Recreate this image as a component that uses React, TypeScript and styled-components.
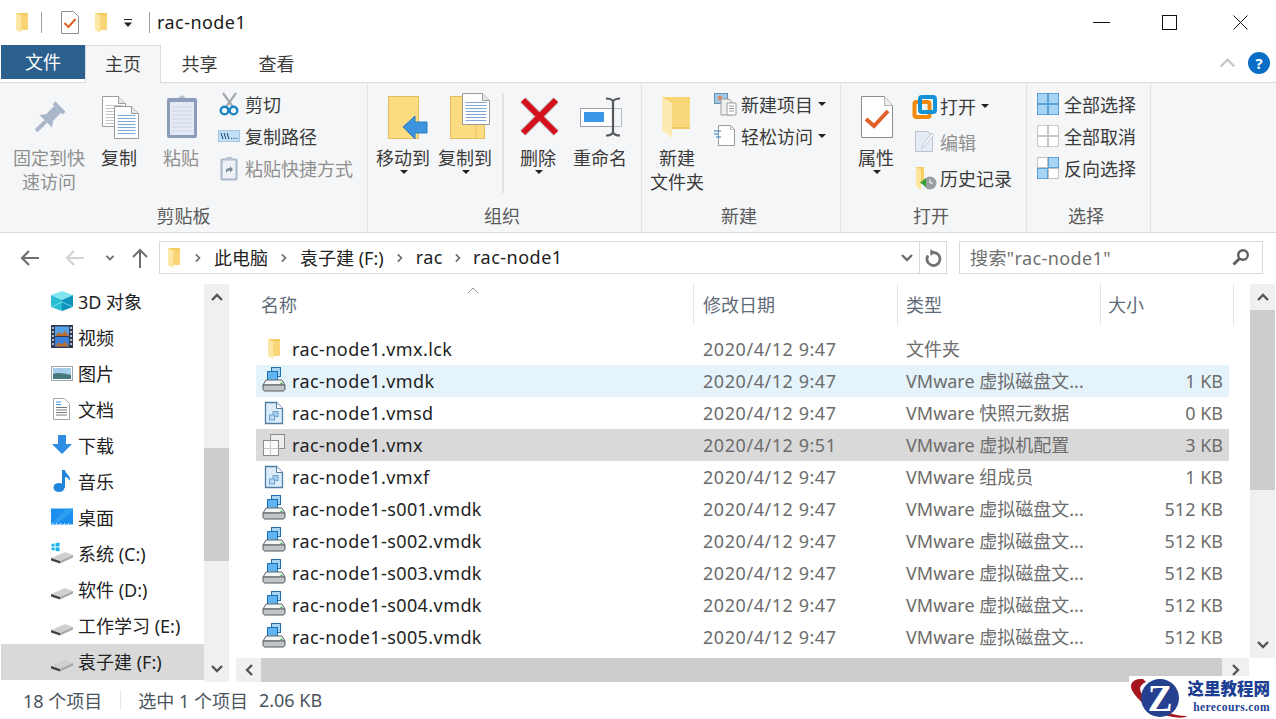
import React from 'react';
import styled, { createGlobalStyle } from 'styled-components';

const GlobalStyle = createGlobalStyle`
  html, body { margin: 0; padding: 0; background: #fff; }
  body { font-family: "Noto Sans", "Noto Sans CJK SC", sans-serif; font-size: 18px; color: #222; }
  * { box-sizing: border-box; }
  svg { display: block; flex-shrink: 0; overflow: visible; }
`;

/* ---------- icons ---------- */

const Folder = ({ w = 14, h = 22 }: { w?: number; h?: number }) => (
  <svg width={w} height={h} viewBox="0 0 14 22">
    <path d="M1 1h12v17H1z" fill="#f4cd62" />
    <path d="M1 1l5.500 2.500V21L1 18z" fill="#fde7a4" />
    <path d="M6.500 3.500H13V18H6.500z" fill="#f8d677" />
  </svg>
);

const Doc = ({ x, y, w, h, lines = '#7fa8d6' }: { x: number; y: number; w: number; h: number; lines?: string }) => {
  const rows = [];
  for (let ly = y + 9; ly < y + h - 2; ly += 3) rows.push(ly);
  return (
    <g>
      <path d={`M${x} ${y}h${w - 7}l7 7v${h - 7}h-${w}z`} fill="#fff" stroke="#9a9a9a" />
      <path d={`M${x + w - 7} ${y}v7h7`} fill="#e8e8e8" stroke="#9a9a9a" />
      {rows.map(ly => <path key={ly} d={`M${x + 3} ${ly}h${w - 6}`} stroke={lines} />)}
    </g>
  );
};

const PinIcon = () => (
  <svg width="48" height="48" viewBox="0 0 48 48">
    <g transform="translate(-1 2) rotate(45 24 24) translate(4.800 4.800) scale(.8)" fill="#a9b5ca">
      <rect x="15" y="2" width="18" height="5" rx="1" />
      <rect x="18" y="7" width="12" height="14" />
      <path d="M18 21h12l5 7H13z" />
      <rect x="21.500" y="28" width="5" height="17" rx="1" />
    </g>
  </svg>
);

const CopyIcon = () => (
  <svg width="48" height="48" viewBox="0 0 48 48">
    <Doc x={7.5} y={3.5} w={23} h={30} lines="#c4c4c4" />
    <Doc x={19.5} y={13.5} w={24} h={32} />
  </svg>
);

const PasteIcon = () => (
  <svg width="48" height="48" viewBox="0 0 48 48">
    <path d="M21 5l4-3 4 3h3v4H18V5z" fill="#b6c0d2" />
    <rect x="10" y="5" width="30" height="40" rx="2" fill="#8c9dbc" />
    <rect x="13" y="9" width="24" height="33" fill="#e5e9f3" />
    {[14, 18, 22, 26, 30, 34, 38].map(y => <path key={y} d={`M15 ${y}h20`} stroke="#cdd5e6" />)}
  </svg>
);

const MoveIcon = () => (
  <svg width="48" height="48" viewBox="0 0 48 48">
    <rect x="9.500" y="3.500" width="30" height="42" fill="#fbdc80" stroke="#e2bd5c" />
    <path d="M24 34l12-11v6h12v11H36v6z" fill="#3d94de" stroke="#2b7cc0" />
  </svg>
);

const CopyToIcon = () => (
  <svg width="48" height="48" viewBox="0 0 48 48">
    <rect x="9.500" y="3.500" width="34" height="42" fill="#fbdc80" stroke="#e2bd5c" />
    <path d="M35 16v29" stroke="#eabf5d" />
    <Doc x={21.5} y={0.5} w={27} h={31} />
  </svg>
);

const DeleteIcon = () => (
  <svg width="48" height="48" viewBox="0 0 48 48">
    <path d="M9 7l33 33M42 7L9 40" stroke="#8f9092" strokeWidth="8" opacity=".45" />
    <path d="M9 7l33 33M42 7L9 40" stroke="#d5101c" strokeWidth="6" />
  </svg>
);

const RenameIcon = () => (
  <svg width="48" height="48" viewBox="0 0 48 48">
    <path d="M36 15.500H4.500v18H36" fill="#fff" stroke="#9aa0a6" />
    <path d="M38 15.500h7.500v18H38" fill="none" stroke="#b6bbc0" />
    <rect x="8" y="19" width="20" height="10" fill="#3d97e8" />
    <path d="M30 5.500c4 0 6 1 7 3 1-2 3-3 7-3M30 42.500c4 0 6-1 7-3 1 2 3 3 7 3M37 8v31" fill="none" stroke="#55585c" strokeWidth="2.200" />
  </svg>
);

const NewFolderIcon = () => (
  <svg width="48" height="48" viewBox="0 0 48 48">
    <path d="M9 4h28v31H9z" fill="#f6d572" />
    <path d="M9 4l10 6v35L9 37z" fill="#fdeab0" />
    <path d="M19 10h18v25H19z" fill="#f9d97e" />
    <path d="M19 35h18" stroke="#f0c860" strokeWidth="2" />
  </svg>
);

const PropsIcon = () => (
  <svg width="48" height="48" viewBox="0 0 48 48">
    <path d="M9.500 3.500h23l8 9v32h-31z" fill="#fff" stroke="#8d8d8d" />
    <path d="M32.500 3.500v9h8" fill="#ececec" stroke="#b5b5b5" />
    <path d="M14 26l8 7 14-15" fill="none" stroke="#e0622a" strokeWidth="4" />
  </svg>
);

const CutIcon = () => (
  <svg width="24" height="24" viewBox="0 0 24 24">
    <path d="M5 1l10 14M18 1L8 15" stroke="#a5a9ae" strokeWidth="2.200" />
    <circle cx="6.500" cy="18.500" r="3.800" fill="none" stroke="#1d85c4" strokeWidth="2.400" />
    <circle cx="15.500" cy="18.500" r="3.800" fill="none" stroke="#1d85c4" strokeWidth="2.400" />
  </svg>
);

const CopyPathIcon = () => (
  <svg width="24" height="24" viewBox="0 0 24 24">
    <rect x="0.500" y="6.500" width="21" height="11" fill="#bfe0f7" stroke="#a4c6e0" />
    <path d="M3 9l2 6M6 9l2 6M9 9l2 6" stroke="#16406a" />
    <path d="M13 14.500h1.200M15.600 14.500h1.200M18.200 14.500h1.200" stroke="#355" />
  </svg>
);

const PasteLinkIcon = () => (
  <svg width="24" height="24" viewBox="0 0 24 24">
    <rect x="3.500" y="3.500" width="15" height="20" rx="1" fill="#eef1f6" stroke="#a9b7cc" strokeWidth="2" />
    <path d="M8 1h6v3H8z" fill="#b9c4d4" />
    <path d="M8 17v-2c0-2 1-3 4-3v-2l3 3.500-3 3v-2c-2 0-3 1-4 2.500z" fill="#7c8796" />
  </svg>
);

const NewItemIcon = () => (
  <svg width="24" height="24" viewBox="0 0 24 24">
    <rect x="0.500" y="1.500" width="13" height="10" fill="#9fc8e8" stroke="#6e8fa8" />
    <rect x="4" y="4" width="4" height="4" fill="#dd8866" />
    <path d="M7 7h8l3 3v13H7z" fill="#f0f0f0" stroke="#9a9a9a" />
    <path d="M13 11h9v12h-9z" fill="#fff" stroke="#9a9a9a" />
    <path d="M15 14h5M15 16.500h5M15 19h5" stroke="#9a9a9a" />
  </svg>
);

const EasyAccessIcon = () => (
  <svg width="24" height="24" viewBox="0 0 24 24">
    <path d="M4.500 1.500h12l4 4v16h-16z" fill="#fff" stroke="#9b9b9b" />
    <path d="M16.500 1.500v4h4" fill="none" stroke="#bdbdbd" />
    <path d="M0 7h7M0 10h5M2 13h5" stroke="#2b7cc0" />
  </svg>
);

const OpenIcon = () => (
  <svg width="24" height="24" viewBox="0 0 24 24">
    <rect x="1.500" y="8" width="15" height="15" rx="2" fill="none" stroke="#f18a0c" strokeWidth="4" />
    <rect x="7" y="3" width="15" height="15" rx="2" fill="none" stroke="#1293d8" strokeWidth="4" />
  </svg>
);

const EditIcon = () => (
  <svg width="24" height="24" viewBox="0 0 24 24">
    <path d="M2.500 1.500h12l5 4v16h-17z" fill="#e5ebf5" stroke="#b9c3d2" />
    <path d="M8 19l3-6 8-10 2 2-9 11z" fill="#f6f7f9" stroke="#c7ccd4" />
  </svg>
);

const HistoryIcon = () => (
  <svg width="24" height="24" viewBox="0 0 24 24">
    <path d="M3 1h8v17H3z" fill="#f6cf63" />
    <path d="M3 1l5 3v20l-5-4z" fill="#fde59a" />
    <circle cx="17" cy="17" r="6.500" fill="#9a9da1" />
    <path d="M17 13.500V17h3" fill="none" stroke="#fff" />
    <path d="M7 16.500l6-4.500v9z" fill="#37a33a" />
  </svg>
);

const Panes = ({ filled, stroke = '#8fb9dc' }: { filled: boolean[]; stroke?: string }) => {
  const cells = [[0.5, 1.5], [11.5, 1.5], [0.5, 12.5], [11.5, 12.5]];
  return (
    <svg width="24" height="24" viewBox="0 0 24 24">
      {cells.map(([x, y], i) => (
        <rect key={i} x={x} y={y} width="10" height="10" fill={filled[i] ? '#a6d4f5' : '#fff'} stroke={filled[i] ? '#5b9fd6' : stroke} />
      ))}
    </svg>
  );
};

const Chevron = ({ dir, color = '#555', size = 14, width = 2.4 }: { dir: 'up' | 'down' | 'left' | 'right'; color?: string; size?: number; width?: number }) => {
  const angle = { up: 0, right: 90, down: 180, left: 270 }[dir];
  return (
    <svg width={size} height={size} viewBox="0 0 14 14">
      <path d="M2 10l5-5 5 5" transform={`rotate(${angle} 7 7)`} fill="none" stroke={color} strokeWidth={width} />
    </svg>
  );
};

const ArrowLeft = ({ color }: { color: string }) => (
  <svg width="20" height="20" viewBox="0 0 20 20">
    <path d="M19 10H2M9 3l-7 7 7 7" fill="none" stroke={color} strokeWidth="2.200" />
  </svg>
);

const CubeIcon = () => (
  <svg width="24" height="24" viewBox="0 0 24 24">
    <path d="M12 2l11 4-11 5L1 6z" fill="#7fe6ef" />
    <path d="M1 6l11 5v11L1 18z" fill="#2bbdd4" />
    <path d="M23 6l-11 5v11l11-4z" fill="#0d93bd" />
    <path d="M1 18l11-5 11 5" fill="none" stroke="#a8eef3" opacity=".6" />
  </svg>
);

const VideoIcon = () => (
  <svg width="24" height="24" viewBox="0 0 24 24">
    <rect x="1" y="0" width="22" height="23" fill="#2d3a55" />
    <rect x="5" y="1.500" width="14" height="9.500" fill="#58a0e8" />
    <rect x="5" y="12" width="14" height="9.500" fill="#3f7fdc" />
    <path d="M5 11l4-4 3 2 3-3 4 5zM5 21.500l4-4 3 2 3-3 4 5z" fill="#b9702c" />
    <path d="M2 3h2M2 7h2M2 11h2M2 15h2M2 19h2M20 3h2M20 7h2M20 11h2M20 15h2M20 19h2" stroke="#dfe6ef" strokeWidth="1.500" />
  </svg>
);

const PictureIcon = () => (
  <svg width="24" height="24" viewBox="0 0 24 24">
    <rect x="1.500" y="5.500" width="21" height="14" fill="#fff" stroke="#9ba6b2" />
    <rect x="3" y="7" width="18" height="11" fill="#a8cdea" />
    <path d="M3 13c5-2 10-1 18 1v4H3z" fill="#47777f" />
  </svg>
);

const DocumentIcon = () => (
  <svg width="24" height="24" viewBox="0 0 24 24">
    <path d="M3.500 1.500h11l5 5v16h-16z" fill="#fff" stroke="#a7a7a7" />
    <path d="M6 5h5M6 7.500h5" stroke="#3d94de" />
    <path d="M6 10.500h11M6 13h11M6 15.500h11M6 18h11" stroke="#7a7a7a" />
  </svg>
);

const DownloadIcon = () => (
  <svg width="24" height="24" viewBox="0 0 24 24">
    <path d="M8 2h8v9h6L12 21 2 11h6z" fill="#2f8de4" />
  </svg>
);

const MusicIcon = () => (
  <svg width="24" height="24" viewBox="0 0 24 24">
    <ellipse cx="9" cy="18.500" rx="5.500" ry="4.500" fill="#1f86dc" />
    <path d="M12 1h3c0 4 6 5 5 11-1-2-3-4-5-4v11h-3z" fill="#1f86dc" />
  </svg>
);

const DesktopIcon = () => (
  <svg width="24" height="24" viewBox="0 0 24 24">
    <rect x="1" y="3.500" width="22" height="16" fill="#1b8fee" />
    <path d="M1 19l16-15.500h6v2L6 19.500z" fill="#3da6f5" opacity=".6" />
    <path d="M2 18.500h20" stroke="#d5ecff" strokeDasharray="1 3" />
  </svg>
);

const DriveIcon = ({ system }: { system?: boolean }) => (
  <svg width="24" height="24" viewBox="0 0 24 24">
    <path d="M1 17l14-6 8 3-13 6z" fill="#cfcfd1" />
    <path d="M1 17l9 3v2.500L1 19.500z" fill="#3f4043" />
    <path d="M10 20l13-6v2.500l-13 6z" fill="#a6a7aa" />
    {system && <path d="M1.500 3l3-.5v3h-3zM5.500 2.300L9.500 1.500v4h-4zM1.500 6.500h3v3l-3-.5zM5.500 6.500h4v4l-4-.7z" fill="#17b3ea" />}
  </svg>
);

const VmdkIcon = () => (
  <svg width="24" height="24" viewBox="0 0 24 24">
    <rect x="9.500" y="-1.500" width="9" height="9" fill="#a5d4f4" stroke="#1f6fb0" />
    <rect x="5.500" y="2.500" width="10" height="10" fill="#62b4f0" stroke="#1f6fb0" />
    <path d="M4 11h16l3 5H1z" fill="#f4f5f6" stroke="#62666a" />
    <path d="M1 16h22v4c0 1-1 2-2 2H3c-1 0-2-1-2-2z" fill="#c2c5c8" stroke="#55585c" />
    <rect x="18.500" y="13.500" width="2" height="1.500" fill="#3fb54a" />
  </svg>
);

const VmsdIcon = () => (
  <svg width="24" height="24" viewBox="0 0 24 24">
    <path d="M3.500 1.500h11l6 6v15h-17z" fill="#dcebf8" stroke="#4d7fa8" strokeWidth="1.300" />
    <path d="M14.500 1.500v6h6" fill="#fff" stroke="#4d7fa8" />
    <rect x="11" y="10.500" width="5" height="5" fill="#a8cdec" stroke="#6da3d2" />
    <rect x="7.500" y="14" width="5" height="5" fill="#bcd9f1" stroke="#6da3d2" />
  </svg>
);

const VmxIcon = () => (
  <svg width="24" height="24" viewBox="0 0 24 24">
    <rect x="8.500" y="1.500" width="14" height="14" fill="#ececec" stroke="#8b8b8b" />
    <rect x="1.500" y="7.500" width="15" height="15" fill="#fbfbfb" stroke="#8b8b8b" />
    <path d="M8.500 7.500v15M1.500 15.500h15" stroke="#c9c9c9" />
  </svg>
);

/* ---------- title bar ---------- */

const TitleBar = styled.div`
  height: 45px;
  display: flex;
  align-items: center;
  padding-left: 15px;
`;

const TitleSep = styled.span<{ $left: number; $right: number }>`
  width: 1px;
  height: 21px;
  background: #a0a0a0;
  margin: 0 ${p => p.$right}px 0 ${p => p.$left}px;
`;

const QuickButton = styled.span<{ $left: number }>`
  display: flex;
  margin-left: ${p => p.$left}px;
`;

const TitleText = styled.span`
  color: #1a1a1a;
  line-height: 24px;
  letter-spacing: .45px;
  margin-bottom: 2px;
`;

const WindowControls = styled.div`
  margin-left: auto;
  display: grid;
  grid-template-columns: 69px 71px 15px;
  align-items: center;
  padding-right: 28px;
`;

/* ---------- tabs ---------- */

const TabBar = styled.div`
  height: 38px;
  display: flex;
  padding-left: 1px;
  border-bottom: 1px solid #dadbdc;
`;

const FileTab = styled.div`
  width: 84px;
  height: 34px;
  padding-bottom: 2px;
  background: #2a5f8e;
  color: #fff;
  display: flex;
  align-items: center;
  justify-content: center;
`;

const Tab = styled.div<{ $active?: boolean }>`
  width: ${p => (p.$active ? 76 : 77)}px;
  height: 38px;
  padding-bottom: 4px;
  display: flex;
  align-items: center;
  justify-content: center;
  color: #3c3c3c;
  background: ${p => (p.$active ? '#f5f6f7' : 'transparent')};
  border: 1px solid ${p => (p.$active ? '#dadbdc' : 'transparent')};
  border-bottom: 0;
`;

const TabRight = styled.div`
  margin-left: auto;
  display: flex;
  align-items: center;
  height: 35px;
  padding-right: 6px;
  gap: 11px;
`;

const HelpBadge = styled.div`
  width: 22px;
  height: 22px;
  border-radius: 50%;
  background: #0a6ec6;
  color: #fff;
  font-size: 15px;
  font-weight: 700;
  display: flex;
  align-items: center;
  justify-content: center;
`;

/* ---------- ribbon ---------- */

const Ribbon = styled.div`
  height: 150px;
  display: flex;
  background: #f5f6f7;
  border-bottom: 1px solid #dadbdc;
`;

const Group = styled.div<{ $width: number }>`
  width: ${p => p.$width}px;
  display: flex;
  flex-direction: column;
  border-right: 1px solid #e2e3e4;
`;

const GroupBody = styled.div<{ $pad: number }>`
  height: 116px;
  display: flex;
  padding-left: ${p => p.$pad}px;
`;

const GroupLabel = styled.div<{ $shift?: number }>`
  height: 33px;
  padding-bottom: 2px;
  padding-right: ${p => p.$shift ?? 0}px;
  display: flex;
  align-items: center;
  justify-content: center;
  color: #5a5a5a;
`;

const LargeButton = styled.div<{ $width: number; $disabled?: boolean }>`
  width: ${p => p.$width}px;
  display: flex;
  flex-direction: column;
  align-items: center;
  padding-top: 10px;
  color: ${p => (p.$disabled ? '#8f8f8f' : '#3b3b3b')};
`;

const LargeLabel = styled.div`
  margin-top: 5px;
  line-height: 24px;
  text-align: center;
`;

const Caret = styled.span`
  display: block;
  width: 0;
  height: 0;
  border-left: 4px solid transparent;
  border-right: 4px solid transparent;
  border-top: 4px solid #222;
  margin-left: 2px;
`;

const GroupDivider = styled.div`
  width: 2px;
  height: 100px;
  margin: 10px 4px 0 6px;
  background: #e0e1e2;
`;

const SmallColumn = styled.div<{ $left: number; $row?: number }>`
  margin-left: ${p => p.$left}px;
  padding-top: 5px;
  display: grid;
  grid-auto-rows: ${p => p.$row ?? 32}px;
`;

const SmallButton = styled.div<{ $disabled?: boolean }>`
  display: flex;
  align-items: center;
  gap: 3px;
  color: ${p => (p.$disabled ? '#8f8f8f' : '#3b3b3b')};
  white-space: nowrap;
`;

/* ---------- address bar ---------- */

const AddressBar = styled.div`
  height: 50px;
  display: flex;
  align-items: center;
  padding-bottom: 1px;
`;

const NavGroup = styled.div`
  display: grid;
  grid-template-columns: 45px 40px 27px 27px;
  align-items: center;
  padding-left: 20px;
`;

const AddressBox = styled.div`
  width: 788px;
  height: 33px;
  display: flex;
  align-items: center;
  padding-left: 7px;
  border: 1px solid #d9d9d9;
`;

const Crumb = styled.span<{ $latin?: boolean }>`
  color: #222;
  white-space: nowrap;
  padding-bottom: 2px;
  letter-spacing: ${p => (p.$latin ? '.5px' : '0')};
`;

const CrumbSep = styled.span<{ $width: number }>`
  width: ${p => p.$width}px;
  display: flex;
  justify-content: center;
`;

const AddressEnd = styled.div`
  margin-left: auto;
  height: 100%;
  display: flex;
  align-items: center;
`;

const RefreshCell = styled.div`
  width: 27px;
  height: 100%;
  margin-left: 5px;
  border-left: 1px solid #d9d9d9;
  display: flex;
  align-items: center;
  justify-content: center;
`;

const SearchBox = styled.div`
  width: 304px;
  height: 33px;
  margin-left: 12px;
  padding: 0 12px 2px 10px;
  display: flex;
  align-items: center;
  justify-content: space-between;
  border: 1px solid #d9d9d9;
  color: #6f6f6f;
  letter-spacing: .4px;
`;

/* ---------- body ---------- */

const Body = styled.div`
  height: 400px;
  display: flex;
  padding-top: 1px;
`;

const NavPane = styled.div`
  width: 204px;
  padding-left: 1px;
`;

const NavItem = styled.div<{ $selected?: boolean }>`
  height: 36px;
  display: flex;
  align-items: center;
  gap: 4px;
  padding: 0 0 2px 49px;
  color: #222;
  background: ${p => (p.$selected ? '#d9d9d9' : 'transparent')};
  white-space: nowrap;
`;

const VScroll = styled.div<{ $height: number }>`
  width: 25px;
  height: ${p => p.$height}px;
  background: #f0f0f0;
  display: flex;
  flex-direction: column;
`;

const ScrollButton = styled.div`
  height: 26px;
  flex-shrink: 0;
  display: flex;
  align-items: center;
  justify-content: center;
`;

const VThumb = styled.div<{ $top: number; $height: number }>`
  height: ${p => p.$height}px;
  margin-top: ${p => p.$top}px;
  margin-bottom: auto;
  background: #cdcdcd;
`;

const MainPane = styled.div`
  width: 1046px;
  margin-left: 1px;
  display: flex;
  flex-direction: column;
`;

const MainTop = styled.div`
  display: flex;
  height: 374px;
`;

const ListPane = styled.div`
  width: 1020px;
  padding-left: 26px;
  position: relative;
`;

const ColumnHeader = styled.div`
  height: 41px;
  display: grid;
  grid-template-columns: 438px 204px 203px 133px;
  color: #5f6b78;
`;

const HeaderCell = styled.div<{ $pad: number }>`
  display: flex;
  align-items: center;
  padding: 0 0 2px ${p => p.$pad}px;
  border-right: 1px solid #e4e5e6;
`;

const SortArrow = styled.span`
  position: absolute;
  left: 236px;
  top: -1px;
`;

const FileList = styled.div`
  margin-top: 8px;
  width: 973px;
`;

const FileRow = styled.div<{ $state?: 'hover' | 'selected' }>`
  height: 32px;
  display: grid;
  grid-template-columns: 447px 203px 202px 121px;
  align-items: center;
  background: ${p => (p.$state === 'hover' ? '#e5f3fb' : p.$state === 'selected' ? '#d9d9d9' : 'transparent')};
  color: #6d6d6d;
  white-space: nowrap;
`;

const NameCell = styled.div`
  display: flex;
  align-items: center;
  gap: 6px;
  padding-left: 6px;
  color: #222;
  letter-spacing: .42px;
`;

const FileIconBox = styled.span`
  width: 24px;
  display: flex;
  justify-content: center;
`;

const DateCell = styled.div`
  letter-spacing: .55px;
`;

const TypeCell = styled.div`
  padding-bottom: 2px;
`;

const SizeCell = styled.div`
  text-align: right;
  padding-right: 6px;
`;

const HScroll = styled.div`
  width: 1013px;
  height: 24px;
  margin: 0 0 0 6px;
  display: flex;
  background: #f0f0f0;
`;

const HScrollButton = styled.div<{ $width: number }>`
  width: ${p => p.$width}px;
  display: flex;
  align-items: center;
  justify-content: center;
`;

const HThumb = styled.div`
  flex: 1;
  background: #cdcdcd;
`;

/* ---------- status bar ---------- */

const StatusBar = styled.div`
  height: 36px;
  display: flex;
  align-items: center;
  padding: 0 0 2px 23px;
  color: #4a5560;
`;

const StatusSep = styled.span`
  width: 1px;
  height: 20px;
  margin: 0 17px 0 18px;
  background: #e6e6e6;
`;

const StatusSize = styled.span`
  margin-left: 11px;
`;

/* ---------- watermark ---------- */

const Watermark = styled.div`
  position: absolute;
  right: 0;
  bottom: 0;
  width: 147px;
  height: 43px;
  background: #fff;
  display: flex;
`;

const WatermarkText = styled.div`
  margin-left: -2px;
  padding-top: 3px;
  display: flex;
  flex-direction: column;
  align-items: flex-end;
  width: 81px;
`;

const WatermarkTitle = styled.div`
  font-size: 16.500px;
  font-weight: 900;
  line-height: 20px;
  color: #1c3f94;
  white-space: nowrap;
`;

const WatermarkUrl = styled.div`
  font-family: "Liberation Serif", serif;
  font-weight: 700;
  font-size: 11.500px;
  line-height: 16px;
  letter-spacing: .4px;
  color: #1c3f94;
`;

const Window = styled.div`
  position: relative;
  width: 1276px;
  height: 719px;
  overflow: hidden;
  background: #fff;
`;

/* ---------- data ---------- */

const navItems = [
  { icon: <CubeIcon />, label: '3D 对象' },
  { icon: <VideoIcon />, label: '视频' },
  { icon: <PictureIcon />, label: '图片' },
  { icon: <DocumentIcon />, label: '文档' },
  { icon: <DownloadIcon />, label: '下载' },
  { icon: <MusicIcon />, label: '音乐' },
  { icon: <DesktopIcon />, label: '桌面' },
  { icon: <DriveIcon system />, label: '系统 (C:)' },
  { icon: <DriveIcon />, label: '软件 (D:)' },
  { icon: <DriveIcon />, label: '工作学习 (E:)' },
  { icon: <DriveIcon />, label: '袁子建 (F:)', selected: true },
];

const VMDK_TYPE = 'VMware 虚拟磁盘文...';

const files: { name: string; icon: React.ReactNode; date: string; type: string; size: string; state?: 'hover' | 'selected' }[] = [
  { name: 'rac-node1.vmx.lck', icon: <Folder />, date: '2020/4/12 9:47', type: '文件夹', size: '' },
  { name: 'rac-node1.vmdk', icon: <VmdkIcon />, date: '2020/4/12 9:47', type: VMDK_TYPE, size: '1 KB', state: 'hover' },
  { name: 'rac-node1.vmsd', icon: <VmsdIcon />, date: '2020/4/12 9:47', type: 'VMware 快照元数据', size: '0 KB' },
  { name: 'rac-node1.vmx', icon: <VmxIcon />, date: '2020/4/12 9:51', type: 'VMware 虚拟机配置', size: '3 KB', state: 'selected' },
  { name: 'rac-node1.vmxf', icon: <VmsdIcon />, date: '2020/4/12 9:47', type: 'VMware 组成员', size: '1 KB' },
  ...['s001', 's002', 's003', 's004', 's005'].map(part => ({
    name: `rac-node1-${part}.vmdk`,
    icon: <VmdkIcon />,
    date: '2020/4/12 9:47',
    type: VMDK_TYPE,
    size: '512 KB',
  })),
];

export default function App() {
  return (
    <Window>
      <GlobalStyle />

      <TitleBar>
        <Folder />
        <TitleSep $left={12} $right={0} />
        <QuickButton $left={19}>
          <svg width="18" height="23" viewBox="0 0 18 23">
            <path d="M.5.500h12l5 5v17H.5z" fill="#fff" stroke="#8d8d8d" />
            <path d="M3.500 12l4 4 7-8" fill="none" stroke="#e0622a" strokeWidth="2" />
          </svg>
        </QuickButton>
        <QuickButton $left={15}><Folder /></QuickButton>
        <QuickButton $left={15}>
          <svg width="10" height="10" viewBox="0 0 10 10">
            <path d="M1 1.500h8" stroke="#222" />
            <path d="M1 4.500h8L5 9z" fill="#222" />
          </svg>
        </QuickButton>
        <TitleSep $left={16} $right={7} />
        <TitleText>rac-node1</TitleText>
        <WindowControls>
          <svg width="17" height="15" viewBox="0 0 17 15"><path d="M0 7.500h17" stroke="#111" /></svg>
          <svg width="15" height="15" viewBox="0 0 15 15"><rect x=".5" y=".5" width="14" height="14" fill="none" stroke="#111" /></svg>
          <svg width="15" height="15" viewBox="0 0 15 15"><path d="M.5.500l14 14M14.500.500l-14 14" stroke="#111" /></svg>
        </WindowControls>
      </TitleBar>

      <TabBar>
        <FileTab>文件</FileTab>
        <Tab $active>主页</Tab>
        <Tab>共享</Tab>
        <Tab>查看</Tab>
        <TabRight>
          <Chevron dir="up" color="#c4c4c4" size={19} width={1.6} />
          <HelpBadge>?</HelpBadge>
        </TabRight>
      </TabBar>

      <Ribbon>
        <Group $width={368}>
          <GroupBody $pad={8}>
            <LargeButton $width={82} $disabled><PinIcon /><LargeLabel>固定到快<br />速访问</LargeLabel></LargeButton>
            <LargeButton $width={58}><CopyIcon /><LargeLabel>复制</LargeLabel></LargeButton>
            <LargeButton $width={66} $disabled><PasteIcon /><LargeLabel>粘贴</LargeLabel></LargeButton>
            <SmallColumn $left={4}>
              <SmallButton><CutIcon />剪切</SmallButton>
              <SmallButton><CopyPathIcon />复制路径</SmallButton>
              <SmallButton $disabled><PasteLinkIcon />粘贴快捷方式</SmallButton>
            </SmallColumn>
          </GroupBody>
          <GroupLabel>剪贴板</GroupLabel>
        </Group>

        <Group $width={274}>
          <GroupBody $pad={4}>
            <LargeButton $width={62}><MoveIcon /><LargeLabel>移动到</LargeLabel><Caret /></LargeButton>
            <LargeButton $width={62}><CopyToIcon /><LargeLabel>复制到</LargeLabel><Caret /></LargeButton>
            <GroupDivider />
            <LargeButton $width={60}><DeleteIcon /><LargeLabel>删除</LargeLabel><Caret /></LargeButton>
            <LargeButton $width={64}><RenameIcon /><LargeLabel>重命名</LargeLabel></LargeButton>
          </GroupBody>
          <GroupLabel $shift={5}>组织</GroupLabel>
        </Group>

        <Group $width={199}>
          <GroupBody $pad={5}>
            <LargeButton $width={60}><NewFolderIcon /><LargeLabel>新建<br />文件夹</LargeLabel></LargeButton>
            <SmallColumn $left={7}>
              <SmallButton><NewItemIcon />新建项目<Caret /></SmallButton>
              <SmallButton><EasyAccessIcon />轻松访问<Caret /></SmallButton>
            </SmallColumn>
          </GroupBody>
          <GroupLabel $shift={4}>新建</GroupLabel>
        </Group>

        <Group $width={186}>
          <GroupBody $pad={5}>
            <LargeButton $width={60}><PropsIcon /><LargeLabel>属性</LargeLabel><Caret /></LargeButton>
            <SmallColumn $left={7} $row={36}>
              <SmallButton><OpenIcon />打开<Caret /></SmallButton>
              <SmallButton $disabled><EditIcon />编辑</SmallButton>
              <SmallButton><HistoryIcon />历史记录</SmallButton>
            </SmallColumn>
          </GroupBody>
          <GroupLabel $shift={5}>打开</GroupLabel>
        </Group>

        <Group $width={124}>
          <GroupBody $pad={10}>
            <SmallColumn $left={0}>
              <SmallButton><Panes filled={[true, true, true, true]} />全部选择</SmallButton>
              <SmallButton><Panes filled={[false, false, false, false]} stroke="#c8c8c8" />全部取消</SmallButton>
              <SmallButton><Panes filled={[false, true, true, false]} stroke="#c0c0c0" />反向选择</SmallButton>
            </SmallColumn>
          </GroupBody>
          <GroupLabel $shift={5}>选择</GroupLabel>
        </Group>
      </Ribbon>

      <AddressBar>
        <NavGroup>
          <ArrowLeft color="#6e6e6e" />
          <ArrowLeft color="#d2d2d2" />
          <Chevron dir="down" color="#6e6e6e" size={10} width={2.4} />
          <svg width="16" height="20" viewBox="0 0 16 20"><path d="M8 20V2M1 9l7-7 7 7" fill="none" stroke="#6e6e6e" strokeWidth="2" /></svg>
        </NavGroup>
        <AddressBox>
          <Folder />
          <CrumbSep $width={33}><Chevron dir="right" color="#6e6e6e" size={10} /></CrumbSep>
          <Crumb>此电脑</Crumb>
          <CrumbSep $width={32}><Chevron dir="right" color="#6e6e6e" size={10} /></CrumbSep>
          <Crumb>袁子建 (F:)</Crumb>
          <CrumbSep $width={32}><Chevron dir="right" color="#6e6e6e" size={10} /></CrumbSep>
          <Crumb $latin>rac</Crumb>
          <CrumbSep $width={30}><Chevron dir="right" color="#6e6e6e" size={10} /></CrumbSep>
          <Crumb $latin>rac-node1</Crumb>
          <AddressEnd>
            <Chevron dir="down" color="#6e6e6e" size={14} />
            <RefreshCell>
              <svg width="17" height="18" viewBox="0 0 17 18">
                <path d="M5.500 3.500H8.500a6.500 6.500 0 1 1-5.500 3" fill="none" stroke="#737373" strokeWidth="2.800" />
                <path d="M5.500 0v7L10 3.500z" fill="#737373" />
              </svg>
            </RefreshCell>
          </AddressEnd>
        </AddressBox>
        <SearchBox>
          搜索"rac-node1"
          <svg width="18" height="18" viewBox="0 0 18 18">
            <circle cx="11" cy="7" r="4.800" fill="none" stroke="#5f5f5f" strokeWidth="2.400" />
            <path d="M7.500 10.500L1.500 16.500" stroke="#5f5f5f" strokeWidth="3" />
          </svg>
        </SearchBox>
      </AddressBar>

      <Body>
        <NavPane>
          {navItems.map(item => (
            <NavItem key={item.label} $selected={item.selected}>{item.icon}{item.label}</NavItem>
          ))}
        </NavPane>
        <VScroll $height={398}>
          <ScrollButton><Chevron dir="up" /></ScrollButton>
          <VThumb $top={138} $height={113} />
          <ScrollButton><Chevron dir="down" /></ScrollButton>
        </VScroll>
        <MainPane>
          <MainTop>
            <ListPane>
              <SortArrow><Chevron dir="up" color="#9a9a9a" size={14} width={1} /></SortArrow>
              <ColumnHeader>
                <HeaderCell $pad={5}>名称</HeaderCell>
                <HeaderCell $pad={9}>修改日期</HeaderCell>
                <HeaderCell $pad={8}>类型</HeaderCell>
                <HeaderCell $pad={7}>大小</HeaderCell>
              </ColumnHeader>
              <FileList>
                {files.map(file => (
                  <FileRow key={file.name} $state={file.state}>
                    <NameCell><FileIconBox>{file.icon}</FileIconBox>{file.name}</NameCell>
                    <DateCell>{file.date}</DateCell>
                    <TypeCell>{file.type}</TypeCell>
                    <SizeCell>{file.size}</SizeCell>
                  </FileRow>
                ))}
              </FileList>
            </ListPane>
            <VScroll $height={374}>
              <ScrollButton><Chevron dir="up" /></ScrollButton>
              <VThumb $top={0} $height={180} />
              <ScrollButton><Chevron dir="down" /></ScrollButton>
            </VScroll>
          </MainTop>
          <HScroll>
            <HScrollButton $width={25}><Chevron dir="left" /></HScrollButton>
            <HThumb />
            <HScrollButton $width={27}><Chevron dir="right" /></HScrollButton>
          </HScroll>
        </MainPane>
      </Body>

      <StatusBar>
        18 个项目
        <StatusSep />
        选中 1 个项目
        <StatusSize>2.06 KB</StatusSize>
      </StatusBar>

      <Watermark>
        <svg width="62" height="43" viewBox="0 0 62 43">
          <path d="M14 3C4 2-1 8 4 16c6 10 22 22 40 25 7 1 12 1 14-1-16 0-30-7-40-16C10 16 8 10 17 6z" fill="#a5161f" />
          <circle cx="31" cy="22" r="19" fill="#24408f" />
          <text x="31" y="35" textAnchor="middle" fontFamily="Liberation Serif, serif" fontWeight="700" fontSize="37" fill="#fff">Z</text>
        </svg>
        <WatermarkText>
          <WatermarkTitle>这里教程网</WatermarkTitle>
          <WatermarkUrl>herecours.com</WatermarkUrl>
        </WatermarkText>
      </Watermark>
    </Window>
  );
}
